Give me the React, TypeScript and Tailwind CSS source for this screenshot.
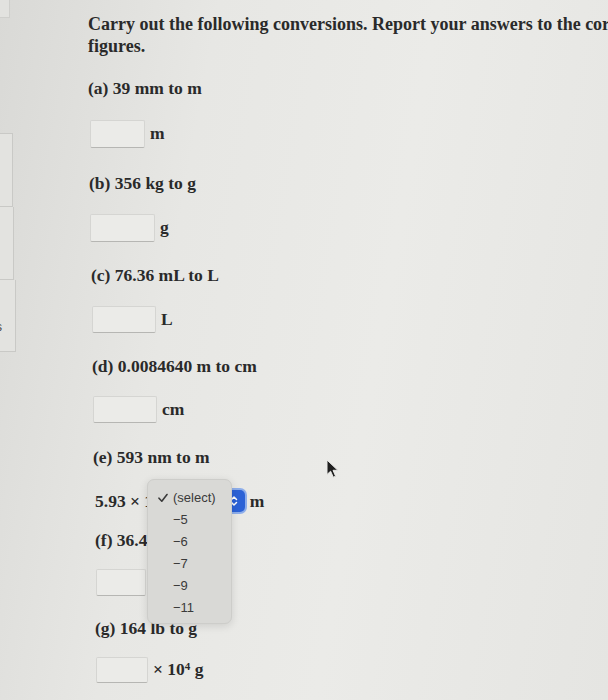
import React from "react";

const serif = "font-['Liberation_Serif','Times_New_Roman',serif]";
const sans = "font-['Liberation_Sans','Helvetica','Arial',sans-serif]";

// Plain question line, e.g. "(a) 39 mm to m"
const Prompt: React.FC<{ className?: string; children: React.ReactNode }> = ({ className = "", children }) => (
  <div className={`h-[22px] leading-[22px] whitespace-nowrap ${className}`}>{children}</div>
);

// Empty answer box with the unit after it
const AnswerRow: React.FC<{ className?: string; boxClass: string; unit?: React.ReactNode }> = ({
  className = "",
  boxClass,
  unit,
}) => (
  <div className={`flex items-center ${className}`}>
    <div className={`rounded-[2px] border border-[#d5d5d2] border-b-[#b6b6b3] bg-[#ebebe8] ${boxClass}`} />
    {unit && <span className="ml-[5px] leading-none">{unit}</span>}
  </div>
);

const options = ["-5", "-6", "-7", "-9", "-11"];

const SelectPopup: React.FC = () => (
  <div
    className={`absolute left-[52px] top-[-8px] z-10 w-[85px] h-[145px] rounded-[7px] border border-[#cdcdca] bg-[#d9d9d6] pt-[7px] shadow-[0_2px_8px_rgba(0,0,0,0.12)] ${sans} font-normal text-[13px] text-[#3a3a3a]`}
  >
    <div className="relative flex h-[22px] items-center pl-[25px]">
      <svg className="absolute left-[10px] top-[6px]" width="10" height="10" viewBox="0 0 10 10" fill="none">
        <path d="M1 5.2 L3.8 8.2 L9 1.5" stroke="#3a3a3a" strokeWidth="1.6" strokeLinecap="round" strokeLinejoin="round" />
      </svg>
      (select)
    </div>
    {options.map((o) => (
      <div key={o} className="flex h-[22px] items-center pl-[25px]">
        {o.replace("-", "\u2212")}
      </div>
    ))}
  </div>
);

const Cursor: React.FC = () => (
  <svg className="absolute left-[326px] top-[459px]" width="14" height="20" viewBox="0 0 14 20">
    <path
      d="M1 1 L1 15.5 L4.6 12.2 L7.3 18.2 L9.6 17.2 L7 11.3 L11.8 11.3 Z"
      fill="#1f1f1f"
      stroke="#e9e9e6"
      strokeWidth="1"
      strokeLinejoin="round"
    />
  </svg>
);

export default function App() {
  return (
    <div
      className={`relative flex h-[700px] w-[608px] overflow-hidden bg-[linear-gradient(100deg,#d9d9d6_0%,#e7e7e4_30%,#ebebe8_60%,#e5e5e2_100%)] ${serif}`}
    >
      {/* cut-off side panel on the left */}
      <div className="flex w-[16px] shrink-0 flex-col">
        <div className="h-[18px] w-[10px] border-r border-b border-[#cfcfcc] bg-[#e2e2df]" />
        <div className="mt-[115px] h-[74px] w-[13px] border border-l-0 border-[#c9c9c6] bg-[#e3e3e0]" />
        <div className="h-[73px] w-[14px] border border-l-0 border-t-0 border-[#c9c9c6] bg-[#e3e3e0]" />
        <div className="h-[72px] w-[16px] border border-l-0 border-t-0 border-[#c9c9c6] bg-[#e3e3e0] pt-[41px]">
          <span className={`-ml-[4px] block text-[12px] leading-none text-[#444] ${sans}`}>s</span>
        </div>
      </div>

      <div className="ml-[72px] flex flex-col pt-[13px] text-[17.5px] font-bold text-[#2a2a2a]">
        <div className="text-[18px] leading-[22px] whitespace-nowrap">
          <div>Carry out the following conversions. Report your answers to the correct number of significant</div>
          <div>figures.</div>
        </div>

        <Prompt className="mt-[20px]">(a) 39 mm to m</Prompt>
        <AnswerRow className="mt-[21px] ml-[2px]" boxClass="w-[55px] h-[28px]" unit="m" />

        <Prompt className="mt-[24px] ml-[1px]">(b) 356 kg to g</Prompt>
        <AnswerRow className="mt-[20px] ml-[2px]" boxClass="w-[65px] h-[28px]" unit="g" />

        <Prompt className="mt-[22px] ml-[3px]">(c) 76.36 mL to L</Prompt>
        <AnswerRow className="mt-[20px] ml-[4px]" boxClass="w-[64px] h-[27px]" unit="L" />

        <Prompt className="mt-[22px] ml-[4px]">(d) 0.0084640 m to cm</Prompt>
        <AnswerRow className="mt-[19px] ml-[5px]" boxClass="w-[64px] h-[27px]" unit="cm" />

        <Prompt className="mt-[23px] ml-[5px]">(e) 593 nm to m</Prompt>
        <div className="relative mt-[19px] ml-[7px] flex h-[28px] items-center whitespace-nowrap">
          <span>5.93 × 10</span>
          <div className="ml-[3px] flex h-[22px] w-[81px] items-center justify-end rounded-[5px] border border-[#b8b8b5] bg-[#f0f0ee]">
            <div className="flex h-[22px] w-[22px] items-center justify-center rounded-[5px] bg-[#2c62d6] ring-2 ring-[#8eaeea]">
              <svg width="8" height="12" viewBox="0 0 8 12" fill="none">
                <path d="M1.5 4.5 L4 2 L6.5 4.5 M1.5 7.5 L4 10 L6.5 7.5" stroke="#ffffff" strokeWidth="1.5" strokeLinecap="round" strokeLinejoin="round" />
              </svg>
            </div>
          </div>
          <span className="ml-[4px]">m</span>
          <SelectPopup />
        </div>

        <Prompt className="mt-[14px] ml-[7px]">(f) 36.4</Prompt>
        <AnswerRow className="mt-[18px] ml-[8px]" boxClass="w-[50px] h-[27px]" />

        <Prompt className="mt-[21px] ml-[7px]">(g) 164 lb to g</Prompt>
        <AnswerRow
          className="mt-[18px] ml-[8px]"
          boxClass="w-[52px] h-[26px]"
          unit={
            <>
              × 10<sup className="text-[11px]">4</sup> g
            </>
          }
        />
      </div>

      <Cursor />
    </div>
  );
}
